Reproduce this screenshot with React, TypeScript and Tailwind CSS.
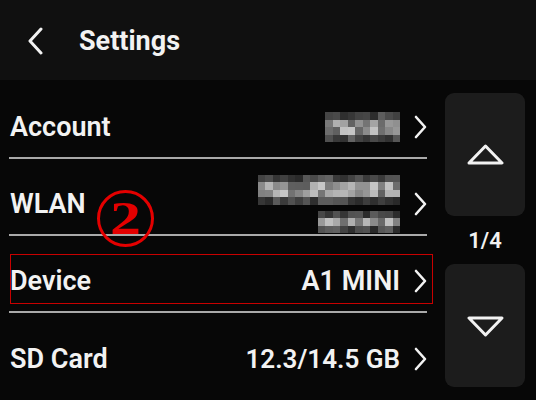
import type { ReactNode } from 'react'

// pixelated (censored) values drawn as mosaic blocks
function mosaic(cols: number, rows: number, seed: number): number[][] {
  let s = seed
  const rnd = (): number => {
    s = (s * 9301 + 49297) % 233280
    return s / 233280
  }
  const out: number[][] = []
  for (let r = 0; r < rows; r++) {
    const row: number[] = []
    for (let c = 0; c < cols; c++) {
      const edge = r === 0 || r === rows - 1
      const base = edge ? 40 + rnd() * 60 : 90 + rnd() * 110
      row.push(Math.round(base))
    }
    out.push(row)
  }
  return out
}

function Mosaic({ cols, rows, seed }: { cols: number; rows: number; seed: number }): JSX.Element {
  const cells = mosaic(cols, rows, seed)
  return (
    <div className="flex flex-col">
      {cells.map((row, i) => (
        <div key={i} className="flex">
          {row.map((g, j) => (
            <div key={j} className="h-[7.5px] w-[7.5px]" style={{ background: `rgb(${g},${g},${g})` }} />
          ))}
        </div>
      ))}
    </div>
  )
}

function Chevron(): JSX.Element {
  return (
    <svg width="13" height="24" viewBox="0 0 13 24" className="shrink-0">
      <polyline points="2,2 11,12 2,22" fill="none" stroke="#f2f2f2" strokeWidth="2.6" strokeLinecap="round" strokeLinejoin="round" />
    </svg>
  )
}

function Row({ label, value, last, children }: { label: string; value: ReactNode; last?: boolean; children?: ReactNode }): JSX.Element {
  return (
    <div className={`relative flex h-[77px] items-center justify-between pt-[15px] ${last ? '' : 'border-b-2 border-[#a9a9a9]'}`}>
      <span className="pl-[1px] text-[27px] font-semibold text-[#f2f2f2]">{label}</span>
      <div className="flex items-center gap-[14px]">
        {value}
        <Chevron />
      </div>
      {children}
    </div>
  )
}

function PageButton({ up }: { up?: boolean }): JSX.Element {
  return (
    <div className="flex h-[123px] w-[80px] items-center justify-center rounded-[9px] bg-[#1c1c1c]">
      <svg width="37" height="22" viewBox="0 0 37 22">
        <polygon
          points={up ? '18.5,2 35,19 2,19' : '2,3 35,3 18.5,20'}
          fill="none"
          stroke="#f2f2f2"
          strokeWidth="3"
          strokeLinejoin="round"
        />
      </svg>
    </div>
  )
}

export default function App(): JSX.Element {
  return (
    <div className="h-[400px] w-[536px] overflow-hidden bg-[#070707] font-['Roboto',sans-serif] text-[#f2f2f2]">
      <header className="flex h-[80px] items-center bg-[#101010] pl-[28px] pt-[2px]">
        <svg width="15" height="28" viewBox="0 0 15 28">
          <polyline points="13,2 2,14 13,26" fill="none" stroke="#f2f2f2" strokeWidth="3" strokeLinecap="round" strokeLinejoin="round" />
        </svg>
        <h1 className="ml-[36px] text-[27px] font-bold">Settings</h1>
      </header>

      <div className="flex">
        <div className="mt-[2px] w-[427px] pl-[9px]">
          <Row label="Account" value={<Mosaic cols={10} rows={4} seed={7} />} />
          <Row
            label="WLAN"
            value={
              <div className="flex flex-col items-end gap-[6px]">
                <Mosaic cols={19} rows={4} seed={31} />
                <Mosaic cols={11} rows={3} seed={58} />
              </div>
            }
          >
            <div className="absolute left-[88px] top-[31px] flex h-[57px] w-[57px] items-center justify-center rounded-full border-[3px] border-[#e40000]">
              <span className="scale-x-[1.35] font-['Liberation_Serif',serif] text-[46px] font-bold leading-none text-[#e40000]">2</span>
            </div>
          </Row>
          <Row label="Device" value={<span className="text-[27px] font-semibold">A1 MINI</span>}>
            <div className="absolute left-[1px] top-[18px] h-[50px] w-[423px] border border-[#c80000]" />
          </Row>
          <Row label="SD Card" value={<span className="text-[26px] font-semibold">12.3/14.5 GB</span>} last />
        </div>

        <div className="ml-[18px] flex w-[80px] flex-col items-center pt-[13px]">
          <PageButton up />
          <span className="flex h-[48px] items-center text-[22px] font-semibold">1/4</span>
          <PageButton />
        </div>
      </div>
    </div>
  )
}
